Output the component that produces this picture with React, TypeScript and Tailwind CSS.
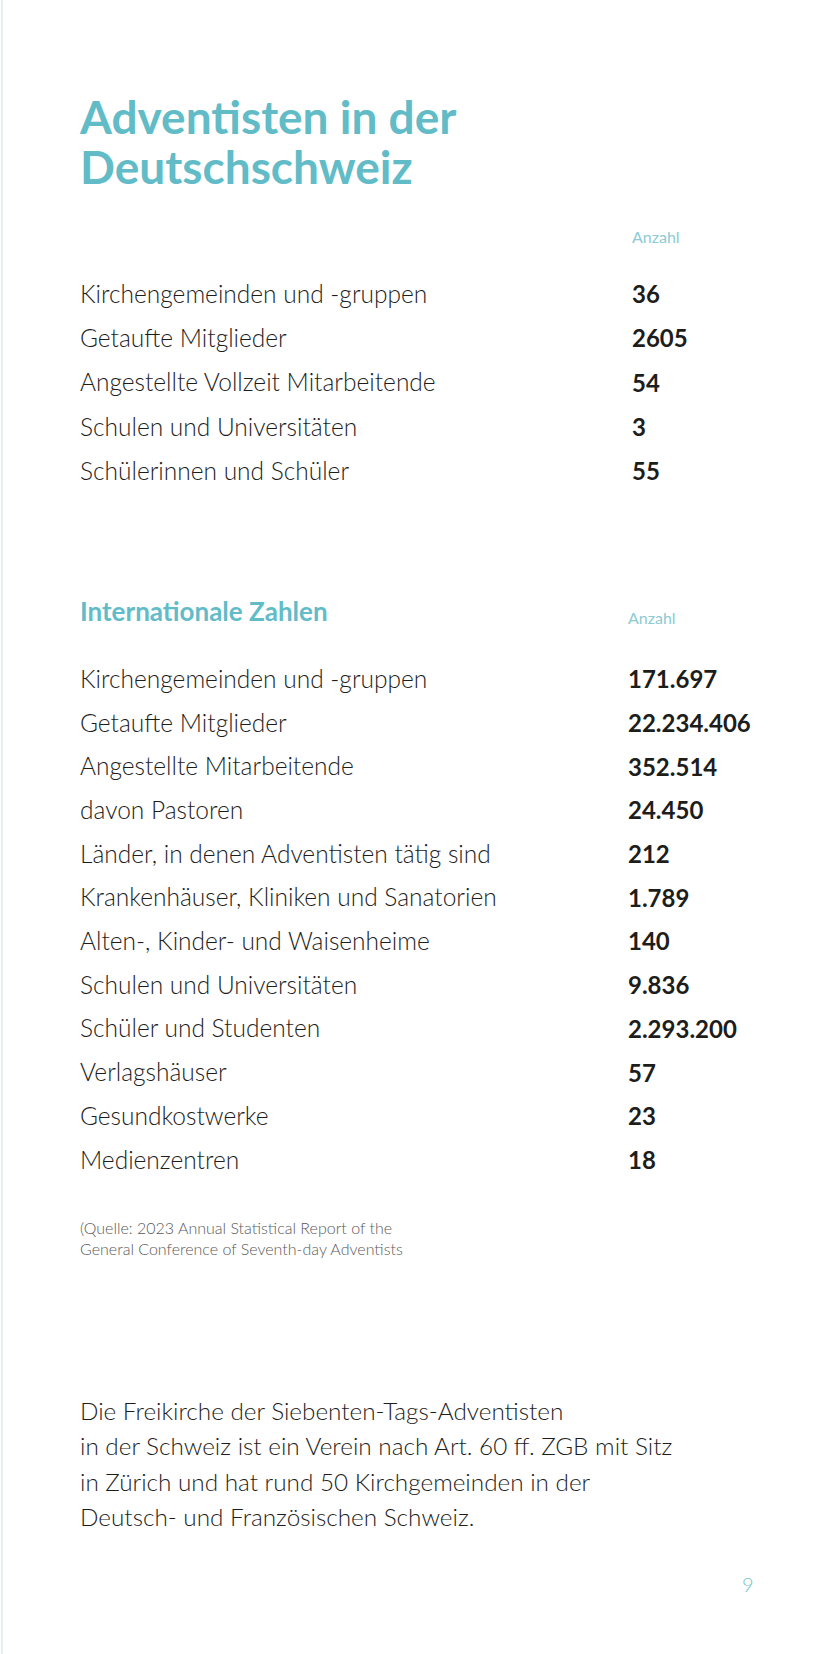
import React from 'react';

const schweiz: [string, string][] = [
  ['Kirchengemeinden und -gruppen', '36'],
  ['Getaufte Mitglieder', '2605'],
  ['Angestellte Vollzeit Mitarbeitende', '54'],
  ['Schulen und Universitäten', '3'],
  ['Schülerinnen und Schüler', '55'],
];

const international: [string, string][] = [
  ['Kirchengemeinden und -gruppen', '171.697'],
  ['Getaufte Mitglieder', '22.234.406'],
  ['Angestellte Mitarbeitende', '352.514'],
  ['davon Pastoren', '24.450'],
  ['Länder, in denen Adventisten tätig sind', '212'],
  ['Krankenhäuser, Kliniken und Sanatorien', '1.789'],
  ['Alten-, Kinder- und Waisenheime', '140'],
  ['Schulen und Universitäten', '9.836'],
  ['Schüler und Studenten', '2.293.200'],
  ['Verlagshäuser', '57'],
  ['Gesundkostwerke', '23'],
  ['Medienzentren', '18'],
];

const App: React.FC = () => {
  return (
    <div className="relative w-[827px] h-[1654px] bg-white font-['Lato',sans-serif] text-[#1d1d1b]">
      {/* feiner Rand links */}
      <div className="absolute left-[1px] top-0 h-full w-[2px] bg-[#e3f0ee]" />

      <div className="pl-[80px] pr-[20px] pt-[92px]">
        <h1 className="text-[46px] leading-[50px] font-bold text-[#62bcc7]">
          <span className="block">Adventisten in der</span>
          <span className="block">Deutschschweiz</span>
        </h1>

        {/* Deutschschweiz */}
        <div className="mt-[35px] grid grid-cols-[552px_1fr]">
          <div />
          <div className="text-[16px] leading-[20px] text-[#8ccbd2]">Anzahl</div>
        </div>
        <div className="mt-[25px]">
          {schweiz.map(([label, value]) => (
            <div key={label} className="grid grid-cols-[552px_1fr] h-[44.3px] items-center">
              <span className="text-[24.5px] font-light">{label}</span>
              <span className="text-[24px] font-bold">{value}</span>
            </div>
          ))}
        </div>

        {/* International */}
        <div className="mt-[102px] grid grid-cols-[548px_1fr] h-[32px] items-center">
          <h2 className="text-[26px] leading-[32px] font-bold text-[#62bcc7]">Internationale Zahlen</h2>
          <div className="text-[16px] leading-[20px] text-[#8ccbd2] translate-y-[7px]">Anzahl</div>
        </div>
        <div className="mt-[30px]">
          {international.map(([label, value]) => (
            <div key={label} className="grid grid-cols-[548px_1fr] h-[43.7px] items-center">
              <span className="text-[24.5px] font-light">{label}</span>
              <span className="text-[24px] font-bold">{value}</span>
            </div>
          ))}
        </div>

        <p className="mt-[35px] text-[16px] leading-[21px] text-[#5a5a5a] font-light">
          (Quelle: 2023 Annual Statistical Report of the<br />
          General Conference of Seventh-day Adventists
        </p>

        <p className="mt-[134px] text-[24.3px] leading-[35.5px] font-light">
          Die Freikirche der Siebenten-Tags-Adventisten<br />
          in der Schweiz ist ein Verein nach Art. 60 ff. ZGB mit Sitz<br />
          in Zürich und hat rund 50 Kirchgemeinden in der<br />
          Deutsch- und Französischen Schweiz.
        </p>
      </div>

      <div className="absolute left-[742px] top-[1571px] text-[20px] leading-[26px] text-[#7cc3cb] font-light">9</div>
    </div>
  );
};

export default App;
